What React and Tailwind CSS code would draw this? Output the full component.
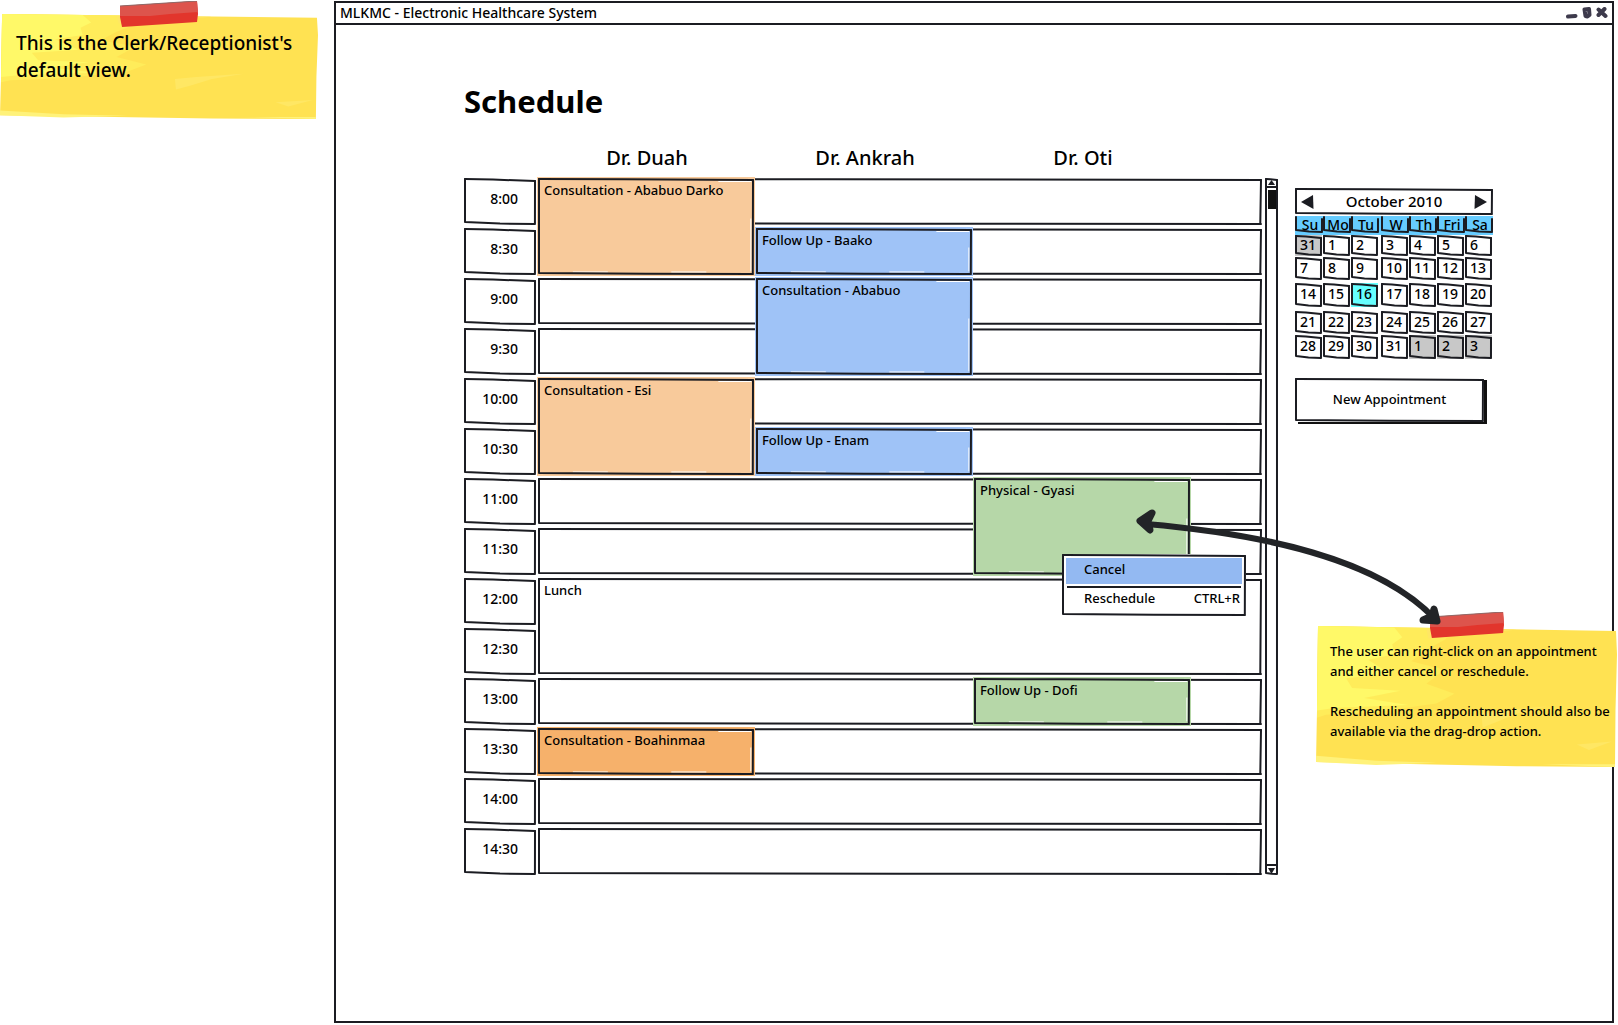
import React from "react";

const INK = "#1b1c22";

/* Hand-drawn outline that stretches with its box; h is the height in pixels. */
function Outline({ h, slant = 1, seams = false, bare = false }) {
  const b = h - 2;
  return (
    <svg
      aria-hidden="true"
      className="pointer-events-none absolute inset-px h-[calc(100%-2px)] w-[calc(100%-2px)] overflow-visible"
      viewBox={`0 0 100 ${b}`}
      preserveAspectRatio="none"
      fill="none"
      stroke={INK}
      strokeWidth="2"
      strokeLinecap="round"
    >
      {seams && (
        <path
          d={`M84 2.5H99 M99 ${b * 0.42}V${b - 3} M16 ${b - 2}H32 M62 ${b - 2}H78`}
          stroke="#fff"
          strokeWidth="1"
          vectorEffect="non-scaling-stroke"
        />
      )}
      {!bare && <path d={`M0 0L40 ${slant * 0.3}L100 ${slant}`} vectorEffect="non-scaling-stroke" />}
      <path
        d={`M100 ${slant}L99.9 ${b} M100 ${b}L50 ${b - slant * 0.2}L0 ${b - slant} M0 0L0 ${b - slant}`}
        vectorEffect="non-scaling-stroke"
      />
    </svg>
  );
}

const SLOTS = [
  { time: "8:00", items: [{ doc: 0, text: "Consultation - Ababuo Darko", long: true, tone: "bg-[#f8ca9b]" }] },
  { time: "8:30", items: [{ doc: 1, text: "Follow Up - Baako", tone: "bg-[#9fc3f7]" }] },
  { time: "9:00", items: [{ doc: 1, text: "Consultation - Ababuo", long: true, tone: "bg-[#9fc3f7]" }] },
  { time: "9:30", items: [] },
  { time: "10:00", items: [{ doc: 0, text: "Consultation - Esi", long: true, tone: "bg-[#f8ca9b]" }] },
  { time: "10:30", items: [{ doc: 1, text: "Follow Up - Enam", tone: "bg-[#9fc3f7]" }] },
  { time: "11:00", items: [{ doc: 2, text: "Physical - Gyasi", long: true, tone: "bg-[#b6d7a8]", menu: true }] },
  { time: "11:30", items: [] },
  { time: "12:00", lunch: true, items: [] },
  { time: "12:30", covered: true, items: [] },
  { time: "13:00", items: [{ doc: 2, text: "Follow Up - Dofi", tone: "bg-[#b6d7a8]" }] },
  { time: "13:30", items: [{ doc: 0, text: "Consultation - Boahinmaa", tone: "bg-[#f6b16b]" }] },
  { time: "14:00", items: [] },
  { time: "14:30", items: [] },
];

const START = ["col-start-1", "col-start-2", "col-start-3"];

function ContextMenu() {
  return (
    <div role="menu" className="absolute left-[88px] top-[76px] z-20 flex h-[62px] w-[184px] flex-col bg-white p-1">
      <button role="menuitem" type="button" className="flex h-[26px] items-center bg-[#93b9f2] pb-1 pl-[18px]">
        Cancel
      </button>
      <span className="mx-px mt-0.5 h-0.5 bg-[#1b1c22]" />
      <button role="menuitem" type="button" className="flex flex-1 items-center justify-between pb-1 pl-[18px] pr-0.5">
        <span>Reschedule</span>
        <span>CTRL+R</span>
      </button>
      <Outline h={62} />
    </div>
  );
}

function Appointment({ item }) {
  return (
    <div className={`relative z-10 row-start-1 ${START[item.doc]} ${item.long ? "h-[97px]" : "h-[47px]"}`}>
      <button type="button" className="absolute inset-0 flex items-start pl-1.5 pt-0.5 text-left">
        <span className={`absolute -inset-px ${item.tone}`} />
        <Outline h={item.long ? 97 : 47} seams />
        <span className="relative">{item.text}</span>
      </button>
      {item.menu && <ContextMenu />}
    </div>
  );
}

function Schedule() {
  return (
    <div className="-ml-0.5 min-w-0 flex-1">
      <table className="w-full table-fixed border-separate border-spacing-x-0.5 border-spacing-y-[3px]">
        <colgroup>
          <col className="w-[72px]" />
          <col className="w-[216px]" />
          <col className="w-[216px]" />
          <col className="w-[216px]" />
          <col />
        </colgroup>
        <thead>
          <tr className="h-10 text-xl leading-6">
            <td />
            <th scope="col" className="p-0 pl-0.5 pt-1.5 font-medium">Dr. Duah</th>
            <th scope="col" className="p-0 pl-0.5 pt-1.5 font-medium">Dr. Ankrah</th>
            <th scope="col" className="p-0 pl-0.5 pt-1.5 font-medium">Dr. Oti</th>
            <td />
          </tr>
        </thead>
        <tbody>
          {SLOTS.map((s) => (
            <tr key={s.time} className="h-[47px]">
              <th scope="row" className="relative p-0 pb-1.5 pr-[18px] text-right text-sm font-medium">
                {s.time}
                <Outline h={47} slant={2} />
              </th>
              {!s.covered && (
                <td colSpan={4} rowSpan={s.lunch ? 2 : 1} className="relative p-0 align-top">
                  <Outline h={s.lunch ? 97 : 47} />
                  {s.lunch ? (
                    <p className="pl-1.5 pt-0.5">Lunch</p>
                  ) : (
                    <div className="grid h-[47px] grid-cols-[216px_216px_216px_1fr] gap-x-0.5">
                      {s.items.map((i) => (
                        <Appointment key={i.text} item={i} />
                      ))}
                    </div>
                  )}
                </td>
              )}
            </tr>
          ))}
        </tbody>
      </table>
    </div>
  );
}

function ScrollBar() {
  return (
    <div className="relative mb-[3px] ml-px mt-[46px] flex w-[13px] shrink-0 flex-col items-center bg-white">
      <button type="button" aria-label="Scroll up" className="flex h-[10px] w-full items-center justify-center border-b-2 border-[#1b1c22]">
        <svg width="7" height="5" viewBox="0 0 7 5"><path d="M3.5 0L7 5H0z" fill={INK} /></svg>
      </button>
      <span className="mt-0.5 h-[19px] w-[8px] bg-[#111]" />
      <button type="button" aria-label="Scroll down" className="mt-auto flex h-[11px] w-full items-center justify-center border-t-2 border-[#1b1c22]">
        <svg width="7" height="6" viewBox="0 0 7 6"><path d="M0 0H7L3.5 6z" fill={INK} /></svg>
      </button>
      <Outline h={698} />
    </div>
  );
}

const WEEKS = [
  { row: "h-[22px]", box: "h-[21px]", h: 21, days: [31, 1, 2, 3, 4, 5, 6] },
  { row: "h-[26px]", box: "h-[23px]", h: 23, days: [7, 8, 9, 10, 11, 12, 13] },
  { row: "h-[28px]", box: "h-[24px]", h: 24, days: [14, 15, 16, 17, 18, 19, 20] },
  { row: "h-[24px]", box: "h-[23px]", h: 23, days: [21, 22, 23, 24, 25, 26, 27] },
  { row: "h-[24px]", box: "h-[24px]", h: 24, days: [28, 29, 30, 31, 1, 2, 3] },
];

function dayTone(week, i, day) {
  if (week === 0 && i === 0) return "bg-[#c8c8c8]";
  if (week === 4 && i > 3) return "bg-[#c8c8c8]";
  return day === 16 ? "bg-[#66ffff]" : "";
}

function Calendar() {
  return (
    <section aria-label="Calendar">
      <div className="relative flex h-[27px] items-center justify-between px-1.5 text-[15px]">
        <button type="button" aria-label="Previous month">
          <svg width="13" height="16" viewBox="0 0 13 16"><path d="M0 8L12 1L12.5 15z" fill={INK} /></svg>
        </button>
        <span className="pb-0.5">October 2010</span>
        <button type="button" aria-label="Next month">
          <svg width="13" height="16" viewBox="0 0 13 16"><path d="M13 8L1 1L.5 15z" fill={INK} /></svg>
        </button>
        <Outline h={27} />
      </div>
      <table className="mt-px w-full table-fixed border-collapse">
        <colgroup>
          <col />
          <col />
          <col className="w-[30px]" />
          <col />
          <col />
          <col />
          <col />
        </colgroup>
        <thead>
          <tr className="h-[19px] bg-[#66ccff]">
            {["Su", "Mo", "Tu", "W", "Th", "Fri", "Sa"].map((d) => (
              <th key={d} scope="col" className="p-0 align-top font-medium">
                <div className={`relative flex h-[17px] items-center justify-center pl-0.5 text-sm leading-4 ${d === "Tu" ? "mr-0.5" : ""}`}>
                  {d}
                  <Outline h={17} slant={2} bare />
                </div>
              </th>
            ))}
          </tr>
        </thead>
        <tbody>
          {WEEKS.map((w, wi) => (
            <tr key={wi} className={w.row}>
              {w.days.map((d, i) => (
                <td key={i} className="p-0 align-top">
                  <button
                    type="button"
                    className={`relative flex w-[27px] items-center pb-0.5 pl-[5px] text-sm ${w.box} ${dayTone(wi, i, d)}`}
                  >
                    {d}
                    <Outline h={w.h} slant={2} />
                  </button>
                </td>
              ))}
            </tr>
          ))}
        </tbody>
      </table>
    </section>
  );
}

/* Yellow paper with brush streaks and a strip of red tape. */
function StickyNote({ className, tapeClass, children }) {
  return (
    <aside className={`relative ${className}`}>
      <svg aria-hidden="true" className="absolute inset-0 h-full w-full" viewBox="0 0 300 100" preserveAspectRatio="none">
        <path d="M2 0L299 3.500L300 20L298.500 60L298 100L200 99.500L0 96.500L1 60z" fill="#ffe252" />
        <path d="M2 0L120 1.500L130 9L110 17L95 25L128 31L110 41L138 48L120 55L90 58L60 61L10 63L1 65L1 50z" fill="#ffec5a" />
        <path d="M2 0L78 1L86 8L76 13L78 20L52 24L74 34L30 37L36 44L84 46L48 51L92 56L20 58L1 60z" fill="#fff968" />
        <path d="M110 2L200 2.500L150 7L112 9z M165 62L185 60L230 57L200 62L180 68L166 72z M260 84L295 82L272 88z" fill="#ffe764" />
        <path d="M0 92L60 95.500L120 97L60 98.500L0 96.500z M225 98L298 98L298 100z" fill="#fff27a" />
      </svg>
      <svg aria-hidden="true" className={`absolute ${tapeClass}`} viewBox="0 0 78 26" preserveAspectRatio="none">
        <path d="M0 5L77 0L78 13L77 21L2 26L0 16z" fill="#e2352c" />
        <path d="M0 5L77 0L78 11L50 13L30 15L0 15z" fill="#dd544c" />
        <path d="M0 5L77 0" stroke="#8d6a68" strokeWidth="1" />
      </svg>
      <div className="relative">{children}</div>
    </aside>
  );
}

function DoubleArrow() {
  return (
    <svg
      aria-hidden="true"
      className="pointer-events-none absolute left-[671px] top-[374px] z-30"
      width="308"
      height="120"
      viewBox="1135 506 308 120"
      fill="none"
      stroke="#222427"
      strokeLinecap="round"
      strokeLinejoin="round"
    >
      <path d="M1146 524C1262 534 1378 558 1435 619" strokeWidth="6" />
      <path d="M1152 513L1140 521L1150 530L1148 521z" strokeWidth="7" fill="#222427" />
      <path d="M1434 609L1437 621L1423 620L1432 616z" strokeWidth="7" fill="#222427" />
    </svg>
  );
}

export default function App() {
  return (
    <div className="flex min-h-screen items-start overflow-x-hidden bg-white font-['Comic_Sans_MS','Noto_Sans',sans-serif] text-[13px] font-medium leading-5 text-black">
      <StickyNote className="mt-3.5 h-[105px] w-[318px] shrink-0 pl-4 pt-4 text-[19px] leading-[27px]" tapeClass="left-[120px] top-[-13px] h-[26px] w-[78px]">
        <p>
          This is the Clerk/Receptionist's
          <br />
          default view.
        </p>
      </StickyNote>

      <div className="relative ml-4 mr-1 mt-px flex min-h-[1022px] min-w-0 flex-1 flex-col border-2 border-[#1b1c22]">
        <header className="flex h-[22px] items-center justify-between border-b-2 border-[#1b1c22] pl-1 pr-1">
          <h2 className="text-sm font-medium leading-5">MLKMC - Electronic Healthcare System</h2>
          <div className="flex items-center gap-1">
            <button type="button" aria-label="Minimize">
              <svg width="12" height="12" viewBox="0 0 12 12"><path d="M2 9.500L9.500 9" stroke="#3d3a4c" strokeWidth="4" strokeLinecap="round" /></svg>
            </button>
            <button type="button" aria-label="Maximize">
              <svg width="10" height="12" viewBox="0 0 10 12" fill="none"><path d="M2.500 2.500L7 2L7.500 8L5.500 9.500L3.500 9z" stroke="#3d3a4c" strokeWidth="4" strokeLinejoin="round" /></svg>
            </button>
            <button type="button" aria-label="Close">
              <svg width="12" height="12" viewBox="0 0 12 12"><path d="M2.500 2.500L9.500 9M8.500 2L2.500 8" stroke="#3d3a4c" strokeWidth="4" strokeLinecap="round" /></svg>
            </button>
          </div>
        </header>

        <main className="pl-[128px] pr-[119px] pt-[56px]">
          <h1 className="text-[31px] font-bold leading-10">Schedule</h1>
          <div className="relative mt-[11px] flex">
            <Schedule />
            <ScrollBar />
            <div className="ml-[17px] mt-14 w-[198px] shrink-0">
              <Calendar />
              <button type="button" className="relative mt-[19px] h-[44px] w-[189px] bg-white pb-0.5 shadow-[3px_2px_0_0_#111]">
                New Appointment
                <Outline h={44} />
              </button>
            </div>
            <div className="absolute left-[852px] top-[494px] z-20">
              <StickyNote
                className="h-[141px] w-[301px] pl-3.5 pt-[15px] text-[13px] leading-5"
                tapeClass="left-[114px] top-[-14px] h-[26px] w-[74px]"
              >
                <p>
                  The user can right-click on an appointment
                  <br />
                  and either cancel or reschedule.
                </p>
                <p className="mt-5">
                  Rescheduling an appointment should also be
                  <br />
                  available via the drag-drop action.
                </p>
              </StickyNote>
            </div>
            <DoubleArrow />
          </div>
        </main>
      </div>
    </div>
  );
}
